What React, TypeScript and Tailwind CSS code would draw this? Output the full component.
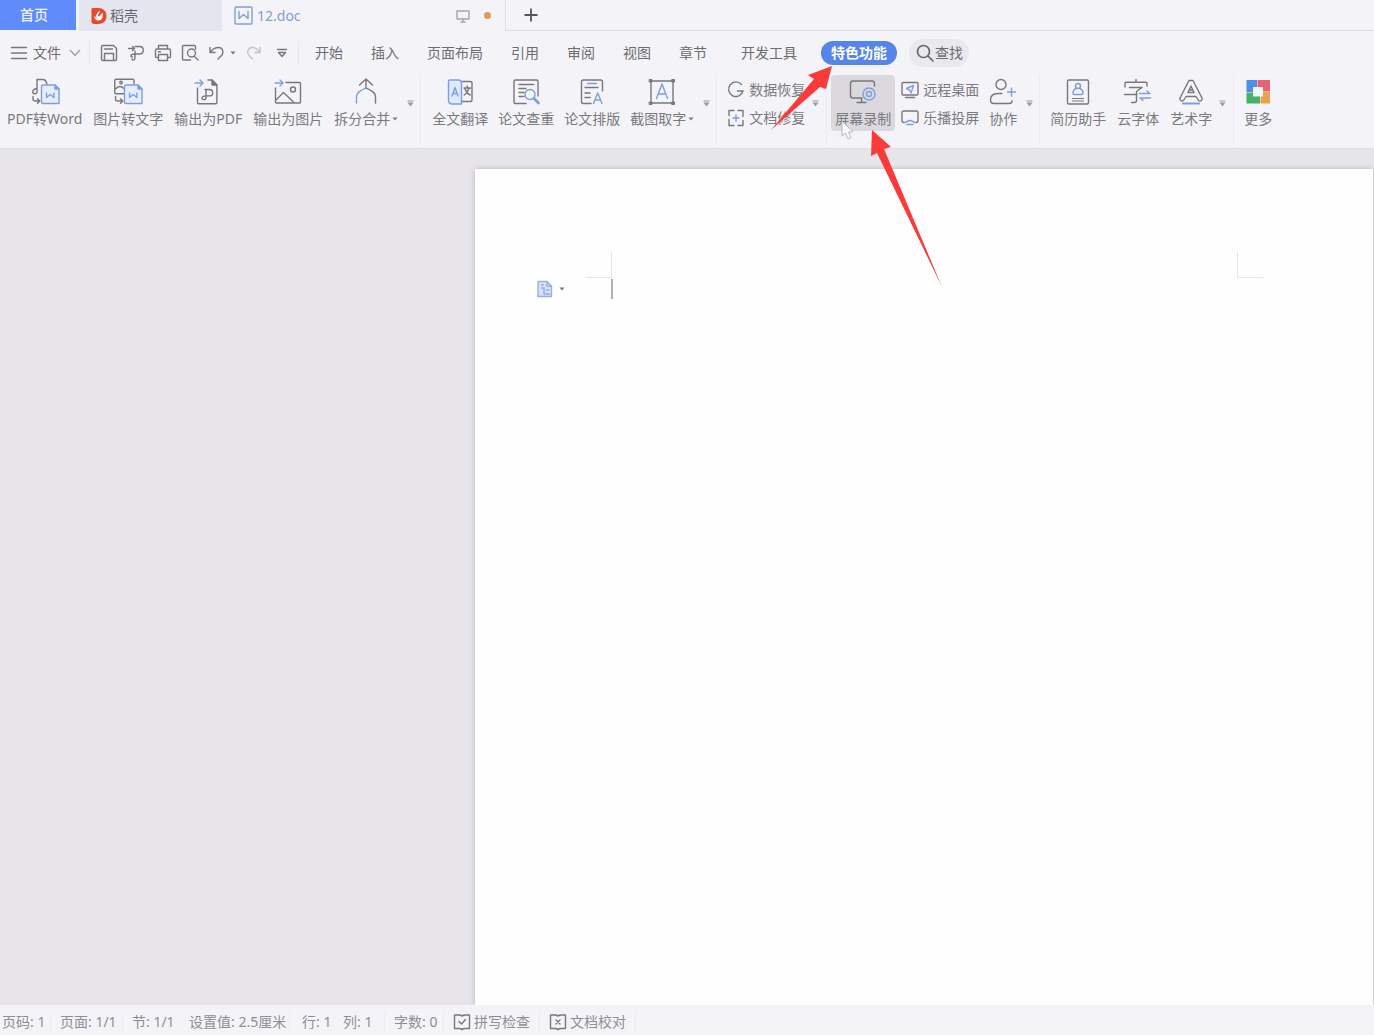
import type { ReactNode } from "react";

const INK = "#77777d";
const BLUE = "#7d9fe0";

function Icon({ size = 32, children }: { size?: number; children: ReactNode }) {
  return (
    <svg
      width={size}
      height={size}
      viewBox={`0 0 ${size} ${size}`}
      fill="none"
      stroke={INK}
      strokeWidth="1.4"
      strokeLinecap="round"
      strokeLinejoin="round"
      className="shrink-0"
      aria-hidden="true"
    >
      {children}
    </svg>
  );
}

/* ---------- ribbon icons (32 x 32) ---------- */

function WordPage() {
  return (
    <g stroke={BLUE}>
      <path d="M14 9h12l4 4v14.500H14a1.500 1.500 0 0 1-1.500-1.500V10.500A1.500 1.500 0 0 1 14 9z" fill="#e6eefe" />
      <path d="M26 9v4h4z" fill={BLUE} />
      <path d="M17.500 17v4.500l3.700-3 3.700 3V17" />
    </g>
  );
}

function PdfToWord() {
  return (
    <Icon>
      <path d="M8 16V3.500h5.500c2.500 0 4 1.500 4.300 4.500M8 12.500c-2 .3-4.300 1.500-4.300 3.500s4.300 2.500 4.300 0M4 20.500V23c0 1.500 1 2 2.500 2h4M8.500 22.800l2.300 2.200-2.300 2.200" />
      <WordPage />
    </Icon>
  );
}

function ImageToText() {
  return (
    <Icon>
      <path d="M22 8V4.500c0-.8-.4-1.200-1.200-1.200H4c-.8 0-1.200.4-1.200 1.200v12c0 .8.400 1.200 1.200 1.200h8M3 13c2-1 3-2.500 5-2.500 1.500 0 2.500.8 4 2M3.500 20.500V23c0 1.500 1 2 2.500 2h4.500M8.500 22.800l2.300 2.200-2.300 2.200" />
      <circle cx="9" cy="6.500" r="1.200" />
      <WordPage />
    </Icon>
  );
}

function ExportPdf() {
  return (
    <Icon>
      <path d="M5.500 12v14.500c0 .8.400 1.200 1.200 1.200h17c.8 0 1.200-.4 1.200-1.200V9l-5-5h-4" />
      <path d="M20 4v5h5z" fill={INK} />
      <path d="M13 13.500h4.500a3.200 3.200 0 0 1 0 6.400h-3.500c-2.500 0-4 .8-4 2.300 0 2 4 2 4-.5v-8" />
      <path d="M3 7h8M8 4l3 3-3 3" stroke={BLUE} />
    </Icon>
  );
}

function ExportImage() {
  return (
    <Icon>
      <path d="M14 6.500h13.500c.7 0 1 .4 1 1V26c0 .7-.3 1-1 1H4.500c-.7 0-1-.3-1-1V12M4 24l7.500-7.500L21.500 26" />
      <circle cx="21" cy="13.500" r="2.500" />
      <path d="M3 7h8M8 4l3 3-3 3" stroke={BLUE} />
    </Icon>
  );
}

function SplitMerge() {
  return (
    <Icon>
      <path d="M16 3.500V12M9.500 9L16 3l6.500 6M16 12c6 3 9.500 4.500 9.500 9v6" />
      <path d="M16 12c-6 3-9.500 4.500-9.500 9v6" stroke={BLUE} />
    </Icon>
  );
}

function Translate() {
  return (
    <Icon>
      <path d="M18 5.500h8.500c.8 0 1.500.6 1.500 1.500v17c0 .8-.6 1.500-1.500 1.500H18M20 12h6.500M23.200 10v2M25 12.500c-.8 3-2.500 5-4.800 6.500M21 13c1 3 2.800 4.800 5.200 6" />
      <path d="M6 4h8c2.200 0 3.500 1.300 3.500 3.500V28H8.500C6 28 4.500 27 4.500 24.500V5.500C4.500 4.500 5 4 6 4z" fill="#dfe9fd" stroke={BLUE} />
      <path d="M8 20l3-8.500 3 8.500M9 17.500h4" stroke={BLUE} />
    </Icon>
  );
}

function PaperCheck() {
  return (
    <Icon>
      <path d="M16 27.500H5.500c-1 0-1.500-.5-1.500-1.500V5.500C4 4.500 4.500 4 5.500 4h21c1 0 1.500.5 1.500 1.500V20M9 8.500h14.500M9 12.500h7M9 16.500h5M9 20.500h5" />
      <circle cx="20" cy="18.500" r="5" stroke={BLUE} fill="#f2f6ff" />
      <path d="M24 22.500l4.500 4.500" stroke={BLUE} strokeWidth="2.800" />
    </Icon>
  );
}

function PaperLayout() {
  return (
    <Icon>
      <path d="M15 27.500H7.500C6 27.500 5.500 27 5.500 25.500V6C5.500 4.500 6 4 7.500 4h17C26 4 26.500 4.500 26.500 6v9M9 11.500h13M9 17h5M9 21.500h5" />
      <path d="M11.500 7.500h9M17.500 27.500l4.200-10.500L26 27.500M19 24h5.500" stroke={BLUE} />
    </Icon>
  );
}

function CaptureText() {
  return (
    <Icon>
      <rect x="5" y="5" width="22" height="22" />
      <g fill={INK} strokeWidth="1">
        <rect x="3.500" y="3.500" width="2.500" height="2.500" />
        <rect x="26" y="3.500" width="2.500" height="2.500" />
        <rect x="3.500" y="26" width="2.500" height="2.500" />
        <rect x="26" y="26" width="2.500" height="2.500" />
      </g>
      <path d="M10.500 22.500L16 8l5.500 14.500M12.500 18h7" stroke={BLUE} />
    </Icon>
  );
}

function ScreenRecord() {
  return (
    <Icon>
      <path d="M15 22H6c-1.500 0-2.500-1-2.500-2.500V7.500C3.500 6 4.500 5 6 5h19c1.500 0 2.500 1 2.500 2.500V10M10 26.500h9M14.500 22v4" />
      <circle cx="22" cy="18" r="6" stroke={BLUE} />
      <circle cx="22" cy="18" r="2.500" stroke={BLUE} />
    </Icon>
  );
}

function Collaborate() {
  return (
    <Icon>
      <circle cx="14" cy="8.500" r="5" />
      <path d="M15 17.500h-4c-5 0-7.500 2.500-7.500 6.500 0 2.500 1 3.500 3.500 3.500h15c2 0 3-.8 3-2.500" />
      <path d="M24.500 12v8M20.500 16h8" stroke={BLUE} />
    </Icon>
  );
}

function Resume() {
  return (
    <Icon>
      <rect x="5.500" y="4" width="21" height="24" rx="1.500" />
      <path d="M10.500 22.500h11M10.500 25h11" strokeWidth="1.200" />
      <g stroke={BLUE}>
        <circle cx="16" cy="10" r="2.500" />
        <path d="M14 12.500c-2 1-3 2.500-3 4.500 0 1 .5 1.500 1.500 1.500h7c1 0 1.500-.5 1.500-1.500 0-2-1-3.500-3-4.500" />
      </g>
    </Icon>
  );
}

function CloudFont() {
  return (
    <Icon>
      <path d="M14 3.500V6M3 11V7.500c0-.8.400-1.200 1.200-1.200h19.600c.8 0 1.200.4 1.200 1.200V10M7.500 11.500H20l-5.500 4v9c0 1.500-.8 2-2 2H9.500M2.500 18.500H15" />
      <path d="M17.500 17.500H28l-3-2.500M28.500 22H18l3 2.500" stroke={BLUE} />
    </Icon>
  );
}

function WordArt() {
  return (
    <Icon>
      <path d="M14 4.500h4L27 22c.8 2-1.500 4-3.500 2.500L21 20.500H11l-2.500 4C6.500 26 4.200 24 5 22zM13 16.500l3-6.500 3 6.500zM14.500 14h3" />
      <path d="M8 27.500h16" stroke={BLUE} strokeWidth="2" />
    </Icon>
  );
}

function MoreBlocks() {
  return (
    <Icon>
      <g stroke="none">
        <path d="M4.500 4H15v7h-4v5H4.500z" fill="#4f8ee6" />
        <path d="M15.500 4H28v11.500h-7V11h-5.500z" fill="#e66272" />
        <path d="M28 16v11.500h-9.500v-7H21V16z" fill="#eda04f" />
        <path d="M4.500 16.500H11v4h7v7H4.500z" fill="#48b169" />
      </g>
    </Icon>
  );
}

/* ---------- small icons ---------- */

function DataRecovery() {
  return (
    <Icon size={18}>
      <path d="M14.500 3.500A7.300 7.300 0 1 0 16 10H10.500" />
    </Icon>
  );
}

function DocRepair() {
  return (
    <Icon size={18}>
      <path d="M7 1.500H2v5M2 10.500v6h5M11 16.500h5v-5M16 7.500v-6h-5" />
      <path d="M9 6v6M6 9h6" stroke={BLUE} />
    </Icon>
  );
}

function RemoteDesktop() {
  return (
    <Icon size={18}>
      <path d="M2 1.500h14c.6 0 1 .4 1 1V13c0 .6-.4 1-1 1H2c-.6 0-1-.4-1-1V2.500c0-.6.400-1 1-1zM4.500 16.500h9" />
      <path d="M12.500 4.500l-7 3 3 1.500 1.500 3z" stroke={BLUE} />
    </Icon>
  );
}

function CastScreen() {
  return (
    <Icon size={18}>
      <path d="M3 13.500C1.500 13.500 1 13 1 11.500V4c0-1.500.5-2 2-2h12c1.500 0 2 .5 2 2v7.500c0 1.500-.5 2-2 2" />
      <path d="M3.500 13.500c2 0 3-2 5.500-2s3.500 2 5.500 2M6 15.500h6" stroke={BLUE} />
    </Icon>
  );
}

function CheckBook() {
  return (
    <Icon size={18}>
      <path d="M1.500 2h5.500L9 3l2-1h5.500v13.500H11l-2 1-2-1H1.500zM6 8.500L8.500 11l4-4.500" />
    </Icon>
  );
}

function CrossBook() {
  return (
    <Icon size={18}>
      <path d="M1.500 2h5.500L9 3l2-1h5.500v13.500H11l-2 1-2-1H1.500zM7 7l4 4M11 7l-4 4" />
    </Icon>
  );
}

function Caret() {
  return (
    <svg width="6" height="4" viewBox="0 0 6 4" fill={INK} className="shrink-0" aria-hidden="true">
      <path d="M0.500 0.500h5L3 3.500z" />
    </svg>
  );
}

/* ---------- ribbon pieces ---------- */

function Tool({ icon, label, menu, active }: { icon: ReactNode; label: string; menu?: boolean; active?: boolean }) {
  return (
    <button
      className={`flex h-14 shrink-0 flex-col items-center whitespace-nowrap pt-px ${active ? "rounded bg-[#dbd9de] px-1" : ""}`}
    >
      {icon}
      <span className="mt-px flex items-center gap-0.5 leading-5">
        {label}
        {menu && <Caret />}
      </span>
    </button>
  );
}

function SmallTool({ icon, label }: { icon: ReactNode; label: string }) {
  return (
    <button className="flex h-7 items-center gap-1 whitespace-nowrap leading-5">
      {icon}
      {label}
    </button>
  );
}

function Expander() {
  return (
    <button aria-label="展开" className="flex h-14 w-2 shrink-0 items-center justify-center">
      <svg width="7" height="7" viewBox="0 0 7 7" fill="#9a9aa0" aria-hidden="true">
        <path d="M0.500 0.500h6v1h-6zM0.500 2.500h6L3.500 6.500z" />
      </svg>
    </button>
  );
}

function Group({ children, className }: { children: ReactNode; className: string }) {
  return <div className={`flex h-[70px] shrink-0 border-r border-[#ebebef] ${className}`}>{children}</div>;
}

function TabBar() {
  return (
    <div className="flex h-[31px] shrink-0">
      <button className="h-[30px] w-[76px] bg-[#5f8bfb] pr-2 font-medium text-[#eef3ff]">首页</button>
      <button className="ml-[3px] flex h-[31px] w-[143px] items-center gap-[3px] bg-[#e4e5ef] pl-3 text-[#66666e]">
        <svg width="16" height="18" viewBox="0 0 16 18" aria-hidden="true">
          <path d="M2 1h5c5 0 8.500 3 8.500 8s-3.500 8-8.500 8H3c-1.500 0-2.500-1-2.500-2.500v-12C.5 1.500 1 1 2 1z" fill="#e8482b" />
          <path d="M8.500 3.500c1 2-1.500 3.500-1.500 6 1.500 0 2.500-1.500 4.500-4 1 4.500-.5 8-4 8-2.500 0-4-1.500-4.300-4 1 0 1.800.5 2.300 1.200C4.500 7.500 6.500 6 8.500 3.500z" fill="#fff" />
        </svg>
        稻壳
      </button>
      <button className="ml-0.5 flex h-[31px] w-[282px] items-center gap-1 border-r border-[#dedee4] pl-2.5 text-[#7f9fd8]">
        <Icon size={19}>
          <g stroke={BLUE}>
            <rect x="1" y="1" width="17" height="17" rx="1" />
            <path d="M5 5.500v7l4.500-4 4.500 4v-7" />
          </g>
        </Icon>
        <span className="flex-1 text-left">12.doc</span>
        <Icon size={14}>
          <path d="M1 2h12v8H1zM7 10v3M5 13h4" stroke="#a5a5ab" />
        </Icon>
        <span className="ml-2.5 mr-3.5 size-[7px] rounded-full bg-[#e0995c]" />
      </button>
      <div className="flex flex-1 items-start border-b border-[#dedee4] bg-[#f3f3f8] pl-4">
        <button aria-label="新建" className="flex h-[30px] w-[18px] items-center justify-center">
          <svg width="14" height="14" viewBox="0 0 14 14" stroke="#55555b" strokeWidth="1.800" aria-hidden="true">
            <path d="M7 0.500v13M0.500 7h13" />
          </svg>
        </button>
      </div>
    </div>
  );
}

const menus = ["开始", "插入", "页面布局", "引用", "审阅", "视图", "章节"];

function MenuBar() {
  return (
    <div className="flex h-[43px] shrink-0 items-center whitespace-nowrap text-[#6c6c71]">
      <button className="flex items-center pl-2.5">
        <Icon size={18}>
          <path d="M1.500 3.500h15M1.500 9h15M1.500 14.500h15" />
        </Icon>
        <span className="ml-[5px]">文件</span>
        <svg width="12" height="8" viewBox="0 0 12 8" fill="none" stroke="#a0a0a5" strokeWidth="1.400" className="ml-2" aria-hidden="true">
          <path d="M1 1l5 5.500L11 1" />
        </svg>
      </button>
      <div className="ml-2 flex h-6 items-center gap-[9px] border-x border-[#e6e6ea] pl-2.5 pr-2.5">
        <button aria-label="保存">
          <Icon size={18}>
            <path d="M3 1.500h10.500l3 3V15c0 1-.5 1.500-1.500 1.500H3c-1 0-1.500-.5-1.500-1.500V3c0-1 .5-1.500 1.500-1.500zM4.500 5h8M4.500 16V9.500h9V16" />
          </Icon>
        </button>
        <button aria-label="输出为PDF">
          <Icon size={18}>
            <path d="M1.500 4.500h6M5.500 2.500l2 2-2 2M8 2.500h4.500c5 0 5 7.500 0 7.500H8c-5 0-5 3-2.500 3M8 7v7c0 2.500-3 2.500-3 1" />
          </Icon>
        </button>
        <button aria-label="打印">
          <Icon size={18}>
            <path d="M4.500 5V1.500h9V5M4.500 13.500H2.500c-.6 0-1-.4-1-1V6.500c0-.8.500-1.500 1.500-1.500h12c1 0 1.500.7 1.500 1.500v6c0 .6-.4 1-1 1h-2M4.500 10.500h9v6h-9zM4.500 7.800h2" />
          </Icon>
        </button>
        <button aria-label="打印预览">
          <Icon size={18}>
            <path d="M7 16H2.500c-.6 0-1-.4-1-1V2.500c0-.6.400-1 1-1h11c.6 0 1 .4 1 1V5M4.500 16h5M13.500 12.500l3.500 3.500" />
            <circle cx="10.500" cy="9" r="4" />
          </Icon>
        </button>
        <button aria-label="撤销" className="flex items-center gap-1">
          <Icon size={18}>
            <path d="M2 3.500v5h5M2.500 8C5 4.500 8 3.500 10.500 3.500c5 0 5.500 6 2.500 8.500l-3 3" />
          </Icon>
          <Caret />
        </button>
        <button aria-label="恢复">
          <Icon size={18}>
            <path d="M15 3.500v5h-5M14.500 8C12 4.500 9.500 3.500 7.500 3.500c-5 0-6 5.500-3 8.500l3 3" stroke="#c3c3c8" />
          </Icon>
        </button>
        <button aria-label="自定义快速访问工具栏" className="ml-1">
          <Icon size={12}>
            <path d="M1.500 2.500h9M2.500 5.500h7L6 9.500z" />
          </Icon>
        </button>
      </div>
      <nav className="ml-4 flex items-center">
        <div className="flex gap-7">
          {menus.map((m) => (
            <button key={m}>{m}</button>
          ))}
        </div>
        <button className="ml-[34px]">开发工具</button>
        <button className="ml-6 h-6 rounded-full bg-[#5585e6] px-2.5 font-bold text-white">特色功能</button>
      </nav>
      <button className="ml-3 flex h-7 items-center rounded-full bg-[#e9e8ed] px-1.5">
        <Icon size={20}>
          <circle cx="8.500" cy="8.500" r="6" strokeWidth="1.700" stroke="#66666b" />
          <path d="M13 13l5 5" strokeWidth="1.700" stroke="#66666b" />
        </Icon>
        查找
      </button>
    </div>
  );
}

function Ribbon() {
  return (
    <div className="flex h-[75px] shrink-0 border-b border-[#e0dfe3] pt-px text-[#7a7a7f]">
      <Group className="gap-[11px] pl-[7px] pr-1.5">
        <Tool icon={<PdfToWord />} label="PDF转Word" />
        <Tool icon={<ImageToText />} label="图片转文字" />
        <Tool icon={<ExportPdf />} label="输出为PDF" />
        <Tool icon={<ExportImage />} label="输出为图片" />
        <div className="flex gap-2">
          <Tool icon={<SplitMerge />} label="拆分合并" menu />
          <Expander />
        </div>
      </Group>
      <Group className="gap-2.5 pl-[11px] pr-1.5">
        <Tool icon={<Translate />} label="全文翻译" />
        <Tool icon={<PaperCheck />} label="论文查重" />
        <Tool icon={<PaperLayout />} label="论文排版" />
        <div className="flex gap-2">
          <Tool icon={<CaptureText />} label="截图取字" menu />
          <Expander />
        </div>
      </Group>
      <Group className="gap-1.5 pl-2.5 pr-[7px]">
        <div className="flex flex-col pt-px">
          <SmallTool icon={<DataRecovery />} label="数据恢复" />
          <SmallTool icon={<DocRepair />} label="文档修复" />
        </div>
        <Expander />
      </Group>
      <Group className="pl-1 pr-1.5">
        <Tool icon={<ScreenRecord />} label="屏幕录制" active />
        <div className="ml-1.5 mr-2 flex flex-col pt-px">
          <SmallTool icon={<RemoteDesktop />} label="远程桌面" />
          <SmallTool icon={<CastScreen />} label="乐播投屏" />
        </div>
        <div className="flex gap-1.5">
          <Tool icon={<Collaborate />} label="协作" />
          <Expander />
        </div>
      </Group>
      <Group className="gap-[11px] pl-2.5 pr-[7px]">
        <Tool icon={<Resume />} label="简历助手" />
        <Tool icon={<CloudFont />} label="云字体" />
        <div className="flex gap-1.5">
          <Tool icon={<WordArt />} label="艺术字" />
          <Expander />
        </div>
      </Group>
      <div className="pl-2">
        <Tool icon={<MoreBlocks />} label="更多" />
      </div>
    </div>
  );
}

function Page() {
  return (
    <main className="flex flex-1 bg-[#e7e5e9] pl-[475px] pr-px pt-5">
      <div className="flex-1 bg-[#fefefe] pt-[82px] shadow-[0_0_5px_#b5b4b8]">
        <div className="flex justify-between pl-[111px] pr-[110px]">
          <div className="h-[27px] w-[26px] border-b border-r border-[#e6e6e8]" />
          <div className="h-[27px] w-[26px] border-b border-l border-[#e6e6e8]" />
        </div>
        <div className="flex items-center pl-[62px] pt-px">
          <button aria-label="粘贴选项" className="flex items-center gap-1.5">
            <svg width="16" height="18" viewBox="0 0 16 18" fill="#d5e0f6" stroke="#98b0dd" strokeWidth="1.400" aria-hidden="true">
              <path d="M1 1.500h9l4.500 4.500v10.500H1z" />
              <path d="M10 1.500V6h4.500M4 5h3M4 8h3v6h6M9 10h3.500" fill="none" />
            </svg>
            <Caret />
          </button>
          <span className="ml-[46px] h-5 w-0.5 bg-[#b0b0b4]" />
        </div>
      </div>
    </main>
  );
}

function StatusBar() {
  return (
    <footer className="z-10 flex h-[30px] shrink-0 items-center whitespace-nowrap bg-[#f4f3f7] pt-1 text-[#8e8e94]">
      <span className="w-[51px] border-r border-[#ececf0] pl-0.5">页码: 1</span>
      <span className="w-[72px] border-r border-[#ececf0] pl-[9px]">页面: 1/1</span>
      <span className="w-[66px] pl-[9px]">节: 1/1</span>
      <span className="w-[101px] border-r border-[#ececf0]">设置值: 2.5厘米</span>
      <span className="w-[53px] pl-3">行: 1</span>
      <span className="w-[42px] border-r border-[#ececf0]">列: 1</span>
      <span className="w-[59px] border-r border-[#ececf0] pl-[9px]">字数: 0</span>
      <button className="flex w-[96px] items-center gap-[3px] border-r border-[#ececf0] pl-[9px]">
        <CheckBook />
        拼写检查
      </button>
      <button className="flex w-[96px] items-center gap-[3px] border-r border-[#ececf0] pl-[9px]">
        <CrossBook />
        文档校对
      </button>
    </footer>
  );
}

export default function App() {
  return (
    <div className="relative flex min-h-screen flex-col overflow-hidden bg-[#f4f3f7] font-['Noto_Sans','Noto_Sans_CJK_SC',sans-serif] text-sm leading-5">
      <TabBar />
      <MenuBar />
      <Ribbon />
      <Page />
      <StatusBar />

      {/* Pointer and arrows drawn over the window */}
      <svg
        width="180"
        height="230"
        viewBox="770 60 180 230"
        className="pointer-events-none absolute left-[770px] top-[60px]"
        aria-hidden="true"
      >
        <path d="M842 121v15l3.500-3 2.500 6 3-1.500-2.500-5.500h4.500z" fill="#fafafc" stroke="#b9b9be" />
        <path d="M832 66L808 75l6 4-43 51 49-43 6 2z" fill="#fb3a3a" />
        <path d="M872 130l-1 26 6-3 65 134-58-138 7-2z" fill="#fb3a3a" />
      </svg>
    </div>
  );
}
